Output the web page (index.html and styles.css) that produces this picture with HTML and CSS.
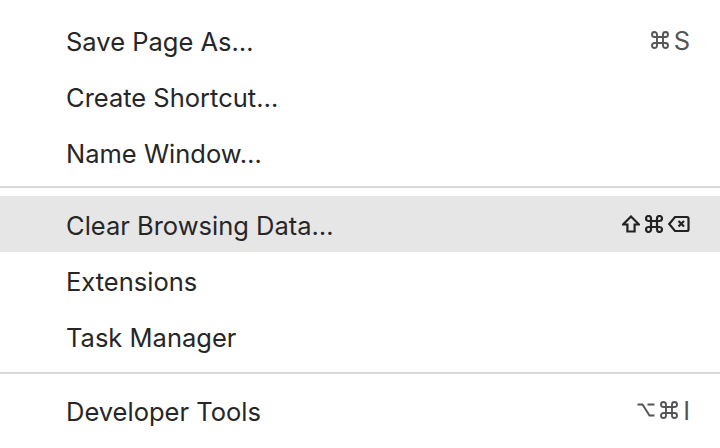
FILE: index.html
```html
<!DOCTYPE html>
<html>
<head>
<meta charset="utf-8">
<link rel="stylesheet" href="styles.css">
</head>
<body>
<div class="menu">
  <div class="item"><span class="label">Save Page As…</span><span class="keys"><svg class="k-cmd" viewBox="0 0 18 18"><path d="M6 3.5A2.5 2.5 0 1 0 3.5 6H14.5A2.5 2.5 0 1 0 12 3.5V14.5A2.5 2.5 0 1 0 14.5 12H3.5A2.5 2.5 0 1 0 6 14.5Z"/></svg><span class="k-txt">S</span></span></div>
  <div class="item"><span class="label">Create Shortcut…</span></div>
  <div class="item"><span class="label">Name Window…</span></div>
  <div class="sep sep-a"></div>
  <div class="item active"><span class="label">Clear Browsing Data…</span><span class="keys"><svg class="k-shift" viewBox="0 0 18 18"><path d="M9 1.5L17 9.5H12.6V16.5H5.4V9.5H1Z"/></svg><svg class="k-cmd" viewBox="0 0 18 18"><path d="M6 3.5A2.5 2.5 0 1 0 3.5 6H14.5A2.5 2.5 0 1 0 12 3.5V14.5A2.5 2.5 0 1 0 14.5 12H3.5A2.5 2.5 0 1 0 6 14.5Z"/></svg><svg class="k-del" viewBox="0 0 22 18"><path d="M7 2H19A1.5 1.5 0 0 1 20.5 3.5V14.5A1.5 1.5 0 0 1 19 16H7L1.2 9Z"/><path d="M10.5 6L16 11.5M16 6L10.5 11.5"/></svg></span></div>
  <div class="item"><span class="label">Extensions</span></div>
  <div class="item"><span class="label">Task Manager</span></div>
  <div class="sep sep-b"></div>
  <div class="item"><span class="label">Developer Tools</span><span class="keys"><svg class="k-opt" viewBox="0 0 18 14"><path d="M0.5 1.5H5.5L12.5 12.5H17.5M10.5 1.5H17.5"/></svg><svg class="k-cmd" viewBox="0 0 18 18"><path d="M6 3.5A2.5 2.5 0 1 0 3.5 6H14.5A2.5 2.5 0 1 0 12 3.5V14.5A2.5 2.5 0 1 0 14.5 12H3.5A2.5 2.5 0 1 0 6 14.5Z"/></svg><span class="k-txt">I</span></span></div>
</div>
</body>
</html>
```

FILE: styles.css
```css
html, body {
  margin: 0;
  padding: 0;
  background: #ffffff;
}

.menu {
  width: 720px;
  height: 448px;
  padding-top: 12px;
  box-sizing: border-box;
  font-family: Inter, "Noto Sans", "Liberation Sans", sans-serif;
  font-size: 25.5px;
  color: #262626;
  overflow: hidden;
}

.item {
  height: 56px;
  display: flex;
  align-items: center;
  justify-content: space-between;
  padding: 0 30px 0 66px;
}

.item.active {
  background: #e6e6e6;
}

.label {
  padding-top: 3px;
}

.keys {
  display: flex;
  align-items: center;
  gap: 5px;
  color: #555555;
}

.keys svg {
  fill: none;
  stroke: #555555;
  stroke-width: 1.9;
  display: block;
}

.active .keys svg {
  stroke: #222222;
  stroke-width: 2.2;
}

.k-cmd {
  width: 18px;
  height: 18px;
}

.k-shift {
  width: 18px;
  height: 18px;
}

.k-del {
  width: 22px;
  height: 18px;
}

.k-opt {
  width: 18px;
  height: 14px;
}

.k-txt {
  line-height: 1;
  padding-top: 2px;
}

.sep {
  height: 2px;
  background: #d9d9d9;
}

.sep-a {
  margin: 6px 0 8px;
}

.sep-b {
  margin: 8px 0 8px;
}
```
